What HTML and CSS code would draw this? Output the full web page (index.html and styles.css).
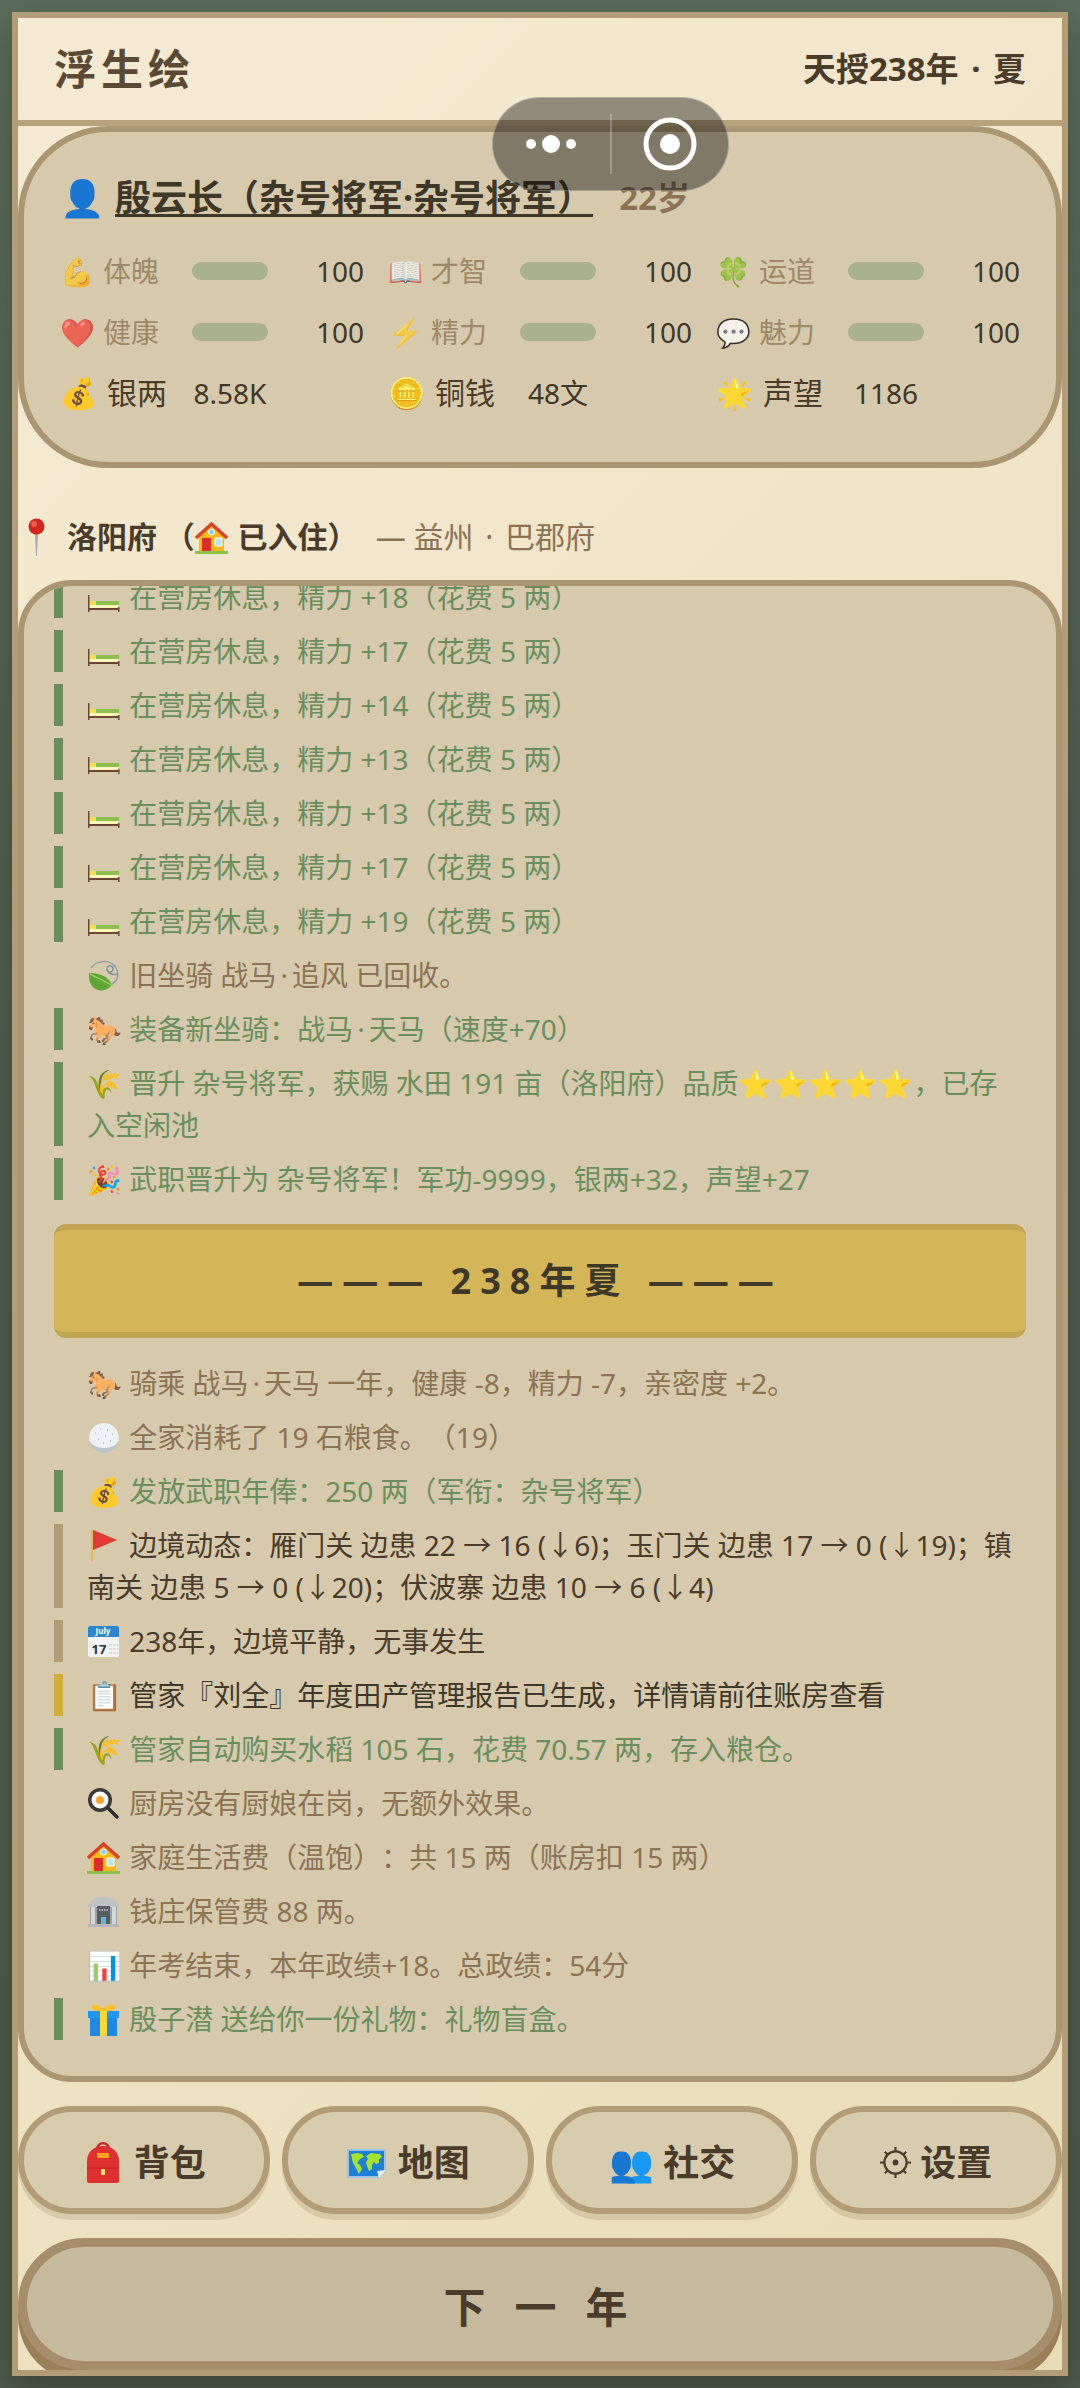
FILE: index.html
```html
<!DOCTYPE html>
<html lang="zh-CN">
<head>
    <meta charset="UTF-8">
    <meta name="viewport" content="width=device-width, initial-scale=1.0">
    <title>浮生绘</title>
    <link rel="stylesheet" href="styles.css">
</head>
<body>
    <svg class="sprite" aria-hidden="true">
        <symbol id="bed" viewBox="0 0 33 33">
            <path d="M2 20h8v5H2z" fill="#f3e04c"/>
            <path d="M9 20h23v4H9z" fill="#8bbf4e"/>
            <path d="M2 24h30v3H2z" fill="#fff8b8"/>
            <path d="M1 14h1.500v17H1zM31 26h1.500v5H31zM1 27h31v2H1z" fill="#6b4636"/>
        </symbol>
        <symbol id="leaf" viewBox="0 0 33 33">
            <path d="M4 9C10 1 24 0 29 9c4 8 1 14-6 17" fill="none" stroke="#8fa3ad" stroke-width="1.500"/>
            <path d="M31 15c-6 2-12-2-11-6 1-3 6-3 6 1 0 3-3 4-5 2" fill="none" stroke="#7d95a3" stroke-width="1.500"/>
            <path d="M2 14c8 0 19 2 23 12-4 6-13 7-18 3-5-4-5-9-5-15z" fill="#5fa637"/>
            <path d="M3 15c5 3 13 6 23 12" fill="none" stroke="#9ccc65" stroke-width="1.500"/>
        </symbol>
        <symbol id="rice" viewBox="0 0 33 33">
            <circle cx="17" cy="17" r="15" fill="#bcc3ca"/>
            <path d="M2 17a15 15 0 0 1 30 0c0 6-7 10-15 10S2 23 2 17z" fill="#eef2f5"/>
            <path d="M8 12h1M13 8h1M20 9h1M25 13h1M11 18h1M18 15h1M23 20h1M16 22h1" stroke="#b4c0ca" stroke-width="1.500"/>
        </symbol>
        <symbol id="flag" viewBox="0 0 33 33">
            <path d="M4 1h2v31H4z" fill="#e2b85a"/>
            <path d="M6 1l24 10L6 21z" fill="#e53935"/>
        </symbol>
        <symbol id="pan" viewBox="0 0 33 33">
            <path d="M21 21l9 9" stroke="#2d2d2d" stroke-width="3.500" stroke-linecap="round"/>
            <circle cx="13" cy="13" r="12" fill="#3b3b3b"/>
            <circle cx="13" cy="13" r="8.500" fill="#fff"/>
            <circle cx="13" cy="13" r="4" fill="#f9a825"/>
        </symbol>
        <symbol id="house" viewBox="0 0 33 33">
            <path d="M4 15L16.500 4 29 15v16H4z" fill="#fbb917"/>
            <path d="M1 17L16.500 3 32 17" fill="none" stroke="#d84327" stroke-width="3.500"/>
            <path d="M7 17h9v14H7z" fill="#dd2c2c"/>
            <path d="M20 17h7v8h-7z" fill="#b3e5fc" stroke="#fff"/>
            <circle cx="16.500" cy="11" r="3" fill="#81d4fa" stroke="#fff"/>
            <path d="M0 30h33v3H0z" fill="#8bc34a"/>
        </symbol>
        <symbol id="bank" viewBox="0 0 33 33">
            <path d="M1 10C5 -1 28 -1 32 10v2H1z" fill="#bfc3c6"/>
            <path d="M3 12h27v17H3z" fill="#9ea3a6"/>
            <path d="M4 12h4v17H4zM25 12h4v17h-4z" fill="#d4d7d9"/>
            <path d="M10 11h13v18H10z" fill="#565e64"/>
            <path d="M14 22h5v7h-5z" fill="#64b5d6"/>
            <path d="M12 15h9" stroke="#a9b0b4" stroke-width="2" stroke-dasharray="1.500 1"/>
            <path d="M1 29h31v3H1z" fill="#b4b8ba"/>
        </symbol>
        <symbol id="gift" viewBox="0 0 33 33">
            <path d="M3 14h27v19H3z" fill="#1e88e5"/>
            <path d="M1 8h31v7H1z" fill="#2196f3"/>
            <path d="M13 8h7v25h-7z" fill="#fdd835"/>
            <path d="M16 8C9 9 3 7 5 3c3-3 9 0 11 3 2-3 9-6 12-3 2 4-5 6-12 5z" fill="#fbc02d"/>
        </symbol>
        <symbol id="pin" viewBox="0 0 35 40">
            <path d="M17 17h3l-1 22h-1z" fill="#a7a9ab"/>
            <circle cx="18.500" cy="9.500" r="8" fill="#d3261f"/>
            <circle cx="16" cy="7" r="3" fill="#ec5a50"/>
        </symbol>
        <symbol id="backpack" viewBox="0 0 42 42">
            <path d="M15 9c0-9 12-9 12 0" fill="none" stroke="#c62828" stroke-width="2.500"/>
            <path d="M5 20C5 0 37 0 37 20v20a2 2 0 0 1-2 2H7a2 2 0 0 1-2-2z" fill="#e02f2f"/>
            <path d="M5 26h32v2H5z" fill="#b71c1c" opacity=".5"/>
            <rect x="15" y="12" width="12" height="5" rx="1" fill="#fba51a"/>
            <rect x="19" y="28" width="4" height="6" rx="1" fill="#ffe082"/>
        </symbol>
        <symbol id="map" viewBox="0 0 42 42">
            <path d="M1 8h39v22l-7 7H1z" fill="#9cc3e6"/>
            <path d="M3 10h35v19l-6 6H3z" fill="#1e7fd6"/>
            <path d="M5 13l6-1 5 1 2 3-4 2-3 4 3 2 2 4-3 5-3-6-3-5-1-4zM20 15l5-3 9 1 2 3-3 2 0 4-3 1-2-2-2 3v4l-3 2-2-5-1-4 2-3z" fill="#a5e22e"/>
            <path d="M33 37l-2-7 9-1z" fill="#e3f0fa"/>
        </symbol>
        <symbol id="gear" viewBox="0 0 32 32">
            <circle cx="16" cy="16" r="11.500" fill="none" stroke="currentColor" stroke-width="2.200"/>
            <circle cx="16" cy="16" r="3" fill="currentColor"/>
            <path d="M16 0v5M16 27v5M0 16h5M27 16h5M5 5l3 3M24 24l3 3M5 27l3-3M24 8l3-3" stroke="currentColor" stroke-width="2.200"/>
        </symbol>
    </svg>

    <div class="game">
        <header class="top-bar">
            <h1>浮生绘</h1>
            <div class="date">天授238年 <span class="dot">·</span> 夏</div>
        </header>

        <section class="status">
            <div class="name-row">
                <span>👤</span>
                <a class="name" href="#">殷云长（杂号将军·杂号将军）</a>
                <span class="age">22岁</span>
            </div>
            <div class="stats">
                <div class="stat"><span class="stat-label"><span>💪</span>体魄</span><span class="bar"></span><span class="num">100</span></div>
                <div class="stat"><span class="stat-label"><span>📖</span>才智</span><span class="bar"></span><span class="num">100</span></div>
                <div class="stat"><span class="stat-label"><span>🍀</span>运道</span><span class="bar"></span><span class="num">100</span></div>
                <div class="stat"><span class="stat-label"><span>❤️</span>健康</span><span class="bar"></span><span class="num">100</span></div>
                <div class="stat"><span class="stat-label"><span>⚡</span>精力</span><span class="bar"></span><span class="num">100</span></div>
                <div class="stat"><span class="stat-label"><span>💬</span>魅力</span><span class="bar"></span><span class="num">100</span></div>
                <div class="stat"><span class="money-label"><span>💰</span>银两</span><span class="money-num">8.58K</span></div>
                <div class="stat"><span class="money-label"><span>🪙</span>铜钱</span><span class="money-num">48文</span></div>
                <div class="stat"><span class="money-label"><span>🌟</span>声望</span><span class="money-num">1186</span></div>
            </div>
        </section>

        <div class="place">
            <svg class="pin"><use href="#pin"/></svg>
            <strong>洛阳府 （<svg class="icon"><use href="#house"/></svg> 已入住）</strong>
            <span class="region">— 益州 <span class="dot">·</span> 巴郡府</span>
        </div>

        <main class="log">
            <div class="log-list">
                <p class="entry good"><svg class="icon"><use href="#bed"/></svg> 在营房休息，精力 +18（花费 5 两）</p>
                <p class="entry good"><svg class="icon"><use href="#bed"/></svg> 在营房休息，精力 +17（花费 5 两）</p>
                <p class="entry good"><svg class="icon"><use href="#bed"/></svg> 在营房休息，精力 +14（花费 5 两）</p>
                <p class="entry good"><svg class="icon"><use href="#bed"/></svg> 在营房休息，精力 +13（花费 5 两）</p>
                <p class="entry good"><svg class="icon"><use href="#bed"/></svg> 在营房休息，精力 +13（花费 5 两）</p>
                <p class="entry good"><svg class="icon"><use href="#bed"/></svg> 在营房休息，精力 +17（花费 5 两）</p>
                <p class="entry good"><svg class="icon"><use href="#bed"/></svg> 在营房休息，精力 +19（花费 5 两）</p>
                <p class="entry"><svg class="icon"><use href="#leaf"/></svg> 旧坐骑 战马<span class="dot">·</span>追风 已回收。</p>
                <p class="entry good">🐎 装备新坐骑：战马<span class="dot">·</span>天马（速度+70）</p>
                <p class="entry good">🌾 晋升 杂号将军，获赐 水田 191 亩（洛阳府）品质⭐⭐⭐⭐⭐，已存入空闲池</p>
                <p class="entry good">🎉 武职晋升为 杂号将军！军功-9999，银两+32，声望+27</p>
                <h2 class="season">——— 238年夏 ———</h2>
                <p class="entry">🐎 骑乘 战马<span class="dot">·</span>天马 一年，健康 -8，精力 -7，亲密度 +2。</p>
                <p class="entry"><svg class="icon"><use href="#rice"/></svg> 全家消耗了 19 石粮食。（19）</p>
                <p class="entry good">💰 发放武职年俸：250 两（军衔：杂号将军）</p>
                <p class="entry event"><svg class="icon"><use href="#flag"/></svg> 边境动态：雁门关 边患 22 → 16 (↓6)；玉门关 边患 17 → 0 (↓19)；镇南关 边患 5 → 0 (↓20)；伏波寨 边患 10 → 6 (↓4)</p>
                <p class="entry event"><svg class="icon" viewBox="0 0 33 33">
                    <rect x="1" y="1" width="31" height="31" rx="2" fill="#f2f4f5"/>
                    <path d="M3 1h27a2 2 0 0 1 2 2v9H1V3a2 2 0 0 1 2-2z" fill="#2a86cf"/>
                    <text x="16" y="9" font-size="8" font-weight="700" text-anchor="middle" fill="#fff">July</text>
                    <text x="12" y="29" font-size="13" font-weight="700" text-anchor="middle" fill="#333">17</text>
                    <path d="M22 20h9M22 24h9M22 28h9" stroke="#aaa" stroke-dasharray="1 1"/>
                </svg> 238年，边境平静，无事发生</p>
                <p class="entry notice">📋 管家『刘全』年度田产管理报告已生成，详情请前往账房查看</p>
                <p class="entry good">🌾 管家自动购买水稻 105 石，花费 70.57 两，存入粮仓。</p>
                <p class="entry"><svg class="icon"><use href="#pan"/></svg> 厨房没有厨娘在岗，无额外效果。</p>
                <p class="entry"><svg class="icon"><use href="#house"/></svg> 家庭生活费（温饱）：共 15 两（账房扣 15 两）</p>
                <p class="entry"><svg class="icon"><use href="#bank"/></svg> 钱庄保管费 88 两。</p>
                <p class="entry">📊 年考结束，本年政绩+18。总政绩：54分</p>
                <p class="entry good"><svg class="icon"><use href="#gift"/></svg> 殷子潜 送给你一份礼物：礼物盲盒。</p>
            </div>
        </main>

        <nav class="menu">
            <button><svg class="big-icon"><use href="#backpack"/></svg> 背包</button>
            <button><svg class="big-icon"><use href="#map"/></svg> 地图</button>
            <button>👥 社交</button>
            <button><svg class="gear"><use href="#gear"/></svg> 设置</button>
        </nav>
        <button class="next">下 一 年</button>
    </div>

    <div class="capsule">
        <button aria-label="更多">
            <svg width="50" height="20" viewBox="0 0 50 20" fill="#fff"><circle cx="5" cy="10" r="5"/><circle cx="25" cy="10" r="9"/><circle cx="45" cy="10" r="5"/></svg>
        </button>
        <button aria-label="关闭">
            <svg width="54" height="54" viewBox="0 0 54 54"><circle cx="27" cy="27" r="24" fill="none" stroke="#fff" stroke-width="5"/><circle cx="27" cy="27" r="10" fill="#fff"/></svg>
        </button>
    </div>
</body>
</html>
```
FILE: styles.css
```css
* {
    margin: 0;
    padding: 0;
    box-sizing: border-box;
}

body {
    font-family: "Noto Sans", "Noto Sans CJK SC", sans-serif;
    text-spacing-trim: space-all;
    background: linear-gradient(180deg, #5a6c5b 0%, #4d5b4d 50%, #4d5a4a 100%);
    padding: 12px;
    font-size: 28px;
    line-height: 42px;
    color: #4a3c2a;
}

button {
    font-family: inherit;
    cursor: pointer;
}

.sprite {
    position: absolute;
    width: 0;
    height: 0;
}

.icon {
    width: 33px;
    height: 33px;
    margin-right: 2px;
    vertical-align: -6px;
}

.dot {
    margin: 0 4px;
}

.game {
    height: calc(100vh - 24px);
    display: flex;
    flex-direction: column;
    border: 6px solid #b39c78;
    background: linear-gradient(135deg, #f5ebd3 0%, #e8dcb8 100%);
    box-shadow: 0 12px 30px rgba(0, 0, 0, 0.25);
    overflow: hidden;
}

/* header */
.top-bar {
    display: flex;
    justify-content: space-between;
    align-items: center;
    height: 108px;
    flex-shrink: 0;
    padding: 0 36px;
    border-bottom: 6px solid #b8a27e;
}

h1 {
    font-size: 42px;
    letter-spacing: 5px;
    color: #5a4a35;
}

.date {
    font-size: 33px;
    font-weight: bold;
}

/* character panel */
.status {
    border: 6px solid #ab9674;
    border-radius: 90px;
    background: #d7caac;
    padding: 36px 36px 48px;
}

.name-row {
    display: flex;
    align-items: center;
    gap: 10px;
    margin-bottom: 22px;
    font-size: 36px;
    font-weight: bold;
    line-height: 60px;
}

.name {
    color: #3e3828;
    text-decoration: underline;
    text-decoration-thickness: 3px;
    text-decoration-skip-ink: none;
    text-underline-offset: 3px;
}

.age {
    margin-left: 16px;
    font-size: 33px;
    color: #8b7355;
}

.stats {
    display: grid;
    grid-template-columns: repeat(3, 1fr);
    gap: 19px 24px;
}

.stat {
    display: flex;
    align-items: center;
}

.stat-label {
    display: flex;
    gap: 8px;
    width: 132px;
    color: #8b7355;
    opacity: 0.75;
}

.bar {
    flex: 1;
    height: 18px;
    border-radius: 9px;
    background: #aab18d;
}

.num {
    width: 96px;
    text-align: right;
    color: #3e3828;
}

.money-label {
    display: flex;
    gap: 10px;
    width: 120px;
    font-size: 30px;
}

.money-num {
    width: 100px;
    text-align: center;
    color: #3e3828;
}

/* location */
.place {
    display: flex;
    align-items: center;
    padding: 48px 0 22px;
    font-size: 30px;
}

.pin {
    width: 35px;
    height: 40px;
    margin-right: 14px;
}

.region {
    margin-left: 18px;
    color: #8b7355;
}

/* event log, keeps the newest entry in view */
.log {
    flex: 1;
    min-height: 0;
    display: flex;
    flex-direction: column-reverse;
    overflow: hidden;
    border: 6px solid #ab9674;
    border-radius: 54px;
    background: #d7caac;
    padding: 30px;
}

.log-list {
    display: flex;
    flex-direction: column;
    gap: 12px;
    padding-bottom: 6px;
}

.entry {
    border-left: 9px solid transparent;
    padding: 0 6px 0 24px;
    color: #8b7355;
}

.entry.good {
    border-color: #6b8e5f;
    color: #6b8e5f;
}

.entry.event {
    border-color: #b39c78;
    color: #4a3c2a;
}

.entry.notice {
    border-color: #d4af37;
    color: #3e3828;
}

.season {
    margin: 12px 0;
    padding: 24px 0;
    border: solid #c1a552;
    border-width: 6px 0;
    border-radius: 12px;
    background: #d4b658;
    font-size: 36px;
    line-height: 54px;
    letter-spacing: 9px;
    text-align: center;
    color: #3e3828;
}

/* bottom menu */
.menu {
    display: flex;
    gap: 12px;
    margin: 24px 0;
}

.menu button {
    flex: 1;
    height: 108px;
    border: 6px solid #b39c78;
    border-radius: 54px;
    background: #d8ccae;
    box-shadow: 0 6px 0 rgba(139, 115, 85, 0.2);
    font-size: 36px;
    font-weight: bold;
    color: #4a3c2a;
}

.big-icon {
    width: 42px;
    height: 42px;
    vertical-align: -7px;
}

.gear {
    width: 31px;
    height: 31px;
    vertical-align: -2px;
}

.next {
    flex-shrink: 0;
    height: 132px;
    border: 9px solid #a68e6d;
    border-radius: 66px;
    background: #c6ba9c;
    box-shadow: 0 12px 0 #9a8058;
    font-size: 42px;
    font-weight: bold;
    letter-spacing: 9px;
    color: #4a3c2a;
}

/* floating capsule over the page */
.capsule {
    position: absolute;
    top: 97px;
    left: 492px;
    display: flex;
    width: 237px;
    height: 94px;
    padding: 16px 0;
    border: 1px solid rgba(255, 255, 255, 0.3);
    border-radius: 47px;
    background: rgba(0, 0, 0, 0.4);
}

.capsule button {
    flex: 1;
    display: flex;
    align-items: center;
    justify-content: center;
    border: none;
    background: none;
}

.capsule button + button {
    border-left: 2px solid rgba(255, 255, 255, 0.25);
}
```
